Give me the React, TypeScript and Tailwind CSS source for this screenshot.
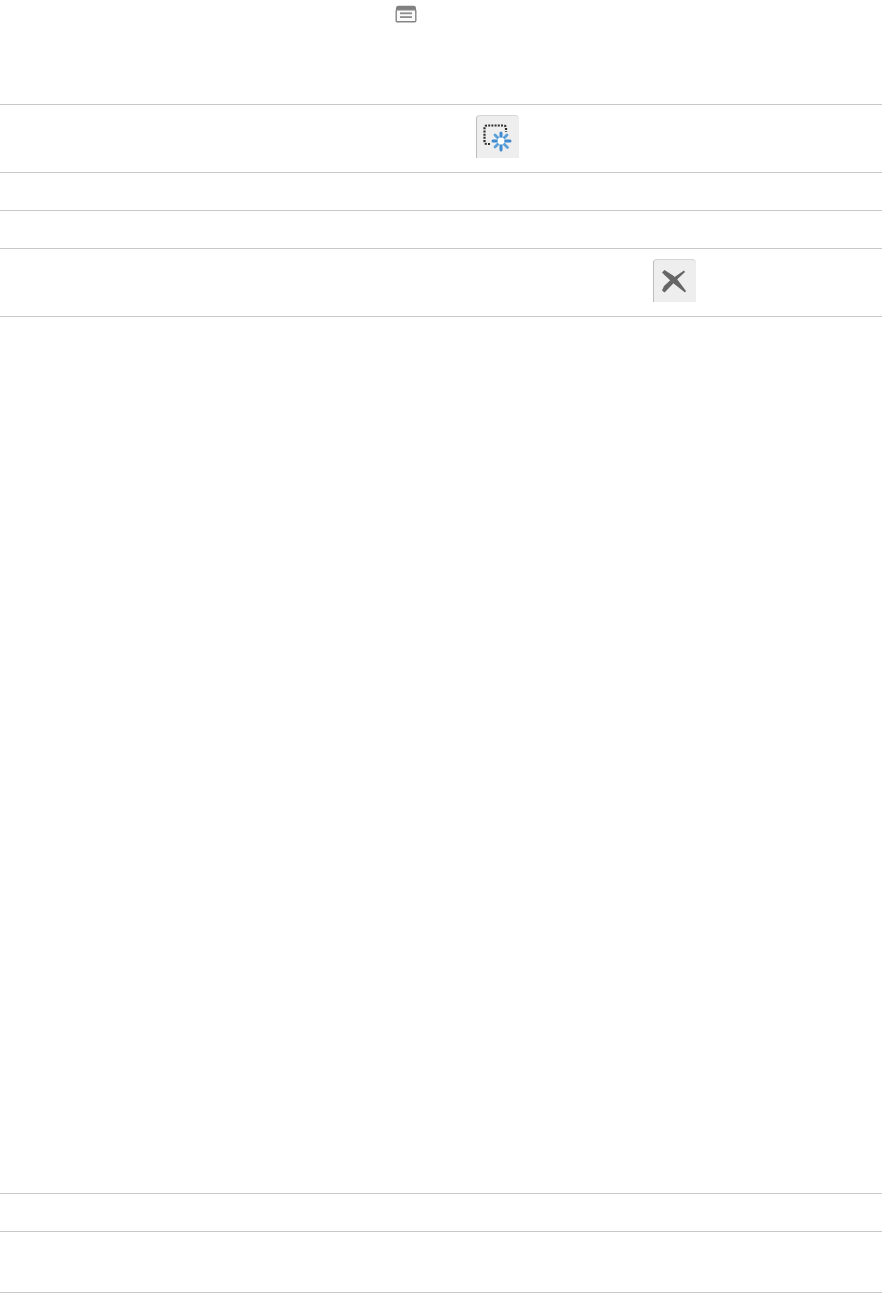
function MenuIcon() {
  return (
    <svg width="22" height="18" viewBox="0 0 22 18" className="block blur-[0.5px]">
      <path d="M1 3 Q1 .8 3.5 .8 H18.5 Q21 .8 21 3 V6 H1 Z" fill="#808080" />
      <rect x="1.2" y="4.8" width="19.6" height="12" rx="1" fill="#fafafa" stroke="#858585" strokeWidth="1.4" />
      <rect x="5" y="7.4" width="12" height="1.8" fill="#8c8c8c" />
      <rect x="5" y="11.2" width="12" height="1.8" fill="#8c8c8c" />
    </svg>
  );
}

function SelectIcon() {
  return (
    <svg width="43" height="43" viewBox="0 0 43 43" className="block blur-[0.6px]">
      <path
        d="M14 29 H11 Q8.5 29 8.5 26.5 V13 Q8.5 10.5 11 10.5 H27.5 Q30 10.5 30 13 V17"
        fill="none"
        stroke="#2f2f2f"
        strokeWidth="2.2"
        strokeDasharray="2 1.2"
      />
      <g stroke="#3f8bd0" strokeWidth="3" strokeLinecap="round">
        <path d="M25 18 V22" />
        <path d="M25 30 V35" />
        <path d="M17 26 H21" />
        <path d="M29 26 H34" />
      </g>
      <g stroke="#5aa0da" strokeWidth="2.8" strokeLinecap="round">
        <path d="M19 20 L22 23" />
        <path d="M28 29 L31.5 32.5" />
        <path d="M31 20 L28 23" />
        <path d="M22 29 L19 32" />
      </g>
      <circle cx="25" cy="26" r="3.4" fill="#ffffff" />
    </svg>
  );
}

function CrossIcon() {
  return (
    <svg width="43" height="43" viewBox="0 0 43 43" className="block blur-[0.6px]">
      <path d="M9 13.5 L11.5 11 L20 16.5 L24 20 L33 32 L32 33.5 L20 24 L12 16.5 Z" fill="#666666" />
      <path d="M31 11.5 L32 13 L24 20.5 L15 30 L11.5 33.5 L9 31.5 L11 27 L18 20.5 Z" fill="#666666" />
    </svg>
  );
}

function IconButton({ children }: { children: React.ReactNode }) {
  return (
    <div className="h-[43px] w-[43px] overflow-hidden rounded-t-[4px] border-t border-l border-t-[#d6d6d6] border-l-[#bdbdbd] bg-[#eeeeee]">
      <div className="-mt-px -ml-px">{children}</div>
    </div>
  );
}

export default function App() {
  return (
    <div className="h-[1293px] w-[882px] bg-white">
      <div className="h-[105px] border-b border-[#c8c8c8] pt-[5px] pl-[395px]">
        <MenuIcon />
      </div>

      <div className="h-[68px] border-b border-[#c8c8c8] pt-[10px] pl-[476px]">
        <IconButton>
          <SelectIcon />
        </IconButton>
      </div>

      <div className="h-[38px] border-b border-[#c8c8c8]" />
      <div className="h-[38px] border-b border-[#c8c8c8]" />

      <div className="h-[68px] border-b border-[#c8c8c8] pt-[10px] pl-[653px]">
        <IconButton>
          <CrossIcon />
        </IconButton>
      </div>

      <div className="h-[877px] border-b border-[#c8c8c8]" />
      <div className="h-[38px] border-b border-[#c8c8c8]" />
      <div className="h-[61px] border-b border-[#c8c8c8]" />
    </div>
  );
}
